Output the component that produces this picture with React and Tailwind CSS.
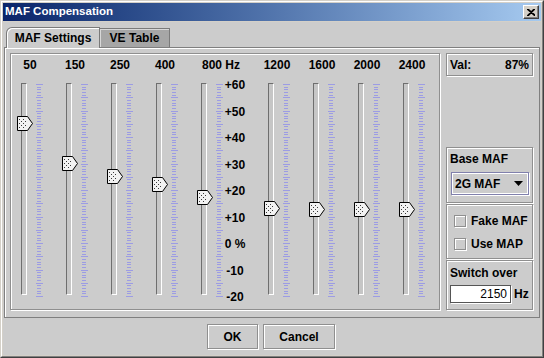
import React from 'react';

const sliders = [
  { label: '50', center: 123, width: 'w-[45px]' },
  { label: '150', center: 163, width: 'w-[45px]' },
  { label: '250', center: 176, width: 'w-[45px]' },
  { label: '400', center: 184, width: 'w-[45px]' },
  { label: '800 Hz', center: 197, width: 'w-[67px]', scale: true },
  { label: '1200', center: 208, width: 'w-[45px]' },
  { label: '1600', center: 209, width: 'w-[45px]' },
  { label: '2000', center: 209, width: 'w-[45px]' },
  { label: '2400', center: 209, width: 'w-[37px]' },
];

const scaleLabels = ['+60', '+50', '+40', '+30', '+20', '+10', '0 %', '-10', '-20'];

const etched = 'border border-[#8f8f8f] shadow-[inset_1px_1px_0_#fff,1px_1px_0_#fff]';

function Ticks() {
  const lines = [];
  for (let i = 0; i <= 80; i++) {
    const y = Math.round(1 + i * 2.65) + 0.5;
    const major = i % 5 === 0;
    lines.push(
      <line key={i} x1={major ? 0 : 1} x2={major ? 7 : 5} y1={y} y2={y} stroke="#9c9ce4" strokeWidth="1" />
    );
  }
  return (
    <svg width="8" height="214" className="block shrink-0 overflow-visible">
      {lines}
    </svg>
  );
}

function Thumb({ top }) {
  const dots = [];
  for (let y = 3; y <= 11; y += 2) {
    for (let x = y % 4 === 1 ? 4 : 2; x <= 9; x += 4) dots.push([x, y]);
  }
  return (
    <svg width="16" height="15" className="absolute left-[-4px]" style={{ top }}>
      <polygon points="0.5,0.5 10.5,0.5 15.5,7.5 10.5,14.5 0.5,14.5" fill="#f2f2f2" stroke="#000" />
      {dots.map(([x, y]) => (
        <rect key={x + '-' + y} x={x} y={y} width="1" height="1" fill="#3a3a3a" />
      ))}
    </svg>
  );
}

function SliderCol({ label, center, width, scale }) {
  return (
    <div className={`flex shrink-0 flex-col ${width}`}>
      {scale ? (
        <div className="h-4 whitespace-nowrap pl-px leading-4">{label}</div>
      ) : (
        <div className="flex h-4 w-[18px] justify-center whitespace-nowrap leading-4">{label}</div>
      )}
      <div className="relative mt-[10px] flex h-[212px]">
        <div className="h-full w-[6px] shrink-0 border border-l-[#6e6e6e] border-t-[#6e6e6e] border-r-white border-b-white bg-[#c6c6c6]" />
        <div className="ml-[9px]">
          <Ticks />
        </div>
        {scale && (
          <div className="-mt-[11px] flex w-[22px] flex-col">
            {scaleLabels.map((s) => (
              <div key={s} className="flex h-[26.5px] shrink-0 items-center justify-center whitespace-nowrap">
                {s}
              </div>
            ))}
          </div>
        )}
        <Thumb top={center - 90} />
      </div>
    </div>
  );
}

function Checkbox({ label }) {
  return (
    <div className="flex h-4 items-center">
      <div className={`h-[12px] w-[12px] ${etched}`} />
      <span className="ml-[5px]">{label}</span>
    </div>
  );
}

export default function App() {
  return (
    <div className="h-[358px] w-[544px] border border-t-[#d4d0c8] border-l-[#d4d0c8] border-r-[#404040] border-b-[#404040] bg-[#d4d0c8] font-['Liberation_Sans',Arial,sans-serif] text-[12px] font-bold text-black">
      <div className="flex h-full flex-col border border-t-white border-l-white border-r-[#808080] border-b-[#808080] p-px">
        <div className="flex h-[18px] shrink-0 items-center justify-between bg-linear-to-r from-[#0a246a] to-[#a6caf0] pl-[2px] pr-[2px]">
          <span className="text-[11.5px] font-bold text-white">MAF Compensation</span>
          <div className="flex h-[14px] w-[16px] items-center justify-center border border-t-white border-l-white border-r-[#404040] border-b-[#404040] bg-[#d4d0c8] shadow-[inset_-1px_-1px_0_#808080]">
            <svg width="8" height="7" viewBox="0 0 8 7">
              <path d="M0 0 L8 7 M1 0 L8 6 M7 0 L0 7 M8 0 L1 7" stroke="#000" strokeWidth="1.2" />
            </svg>
          </div>
        </div>

        <div className="mt-px flex flex-1 flex-col bg-[#cccccc] pt-[5px]">
          <div className="ml-px mr-px flex flex-col">
            <div className="flex h-[20px] items-end pl-[2px]">
              <div className="relative z-10 -mb-px flex h-[21px] w-[94px] items-center justify-center rounded-tl-[6px] border border-b-0 border-[#7a7a7a] bg-[#cccccc] pb-px shadow-[inset_1px_1px_0_#fff]">
                MAF Settings
              </div>
              <div className="flex h-[19px] w-[70px] items-center justify-center border border-b-0 border-l-0 border-[#7a7a7a] bg-[#a6a6a6] pb-px shadow-[inset_1px_1px_0_#d8d8d8]">
                VE Table
              </div>
            </div>

            <div className="flex h-[271px] border border-[#7f7f7f] pb-[7px] pl-[5px] pr-[6px] pt-[5px] shadow-[inset_1px_1px_0_#fff]">
              <div className={`flex h-[257px] w-[430px] shrink-0 pl-[10px] pt-[3px] ${etched}`}>
                {sliders.map((s) => (
                  <SliderCol key={s.label} {...s} />
                ))}
              </div>

              <div className="ml-[6px] flex w-[87px] flex-col">
                <div className={`flex h-[23px] items-center justify-between px-[3px] ${etched}`}>
                  <span>Val:</span>
                  <span>87%</span>
                </div>

                <div className={`mt-auto flex h-[56px] flex-col pl-[3px] pt-[3px] ${etched}`}>
                  <div className="leading-4">Base MAF</div>
                  <div className="ml-px mt-[5px] flex h-[23px] w-[78px] items-center justify-between border border-[#8080ac] pl-[3px] pr-[5px] shadow-[inset_1px_1px_0_#fff,inset_-1px_-1px_0_#fff,1px_1px_0_#fff]">
                    <span>2G MAF</span>
                    <svg width="9" height="5" viewBox="0 0 9 5">
                      <polygon points="0,0 9,0 4.5,5" fill="#000" />
                    </svg>
                  </div>
                </div>

                <div className={`mt-px flex h-[55px] flex-col gap-[7px] pl-[7px] pt-[8px] ${etched}`}>
                  <Checkbox label="Fake MAF" />
                  <Checkbox label="Use MAP" />
                </div>

                <div className={`mt-px flex h-[50px] flex-col pl-[3px] pt-[4px] ${etched}`}>
                  <div className="leading-4">Switch over</div>
                  <div className="mt-[4px] flex items-center">
                    <div className="flex h-[18px] w-[61px] items-center justify-end border border-[#555] bg-white pr-[3px] font-normal shadow-[1px_1px_0_#fff]">
                      2150
                    </div>
                    <span className="ml-[3px]">Hz</span>
                  </div>
                </div>
              </div>
            </div>
          </div>

          <div className="flex justify-center gap-[5px] pr-[2px] pt-[6px]">
            <div className={`flex h-[25px] w-[51px] items-center justify-center ${etched}`}>OK</div>
            <div className={`flex h-[25px] w-[72px] items-center justify-center ${etched}`}>Cancel</div>
          </div>
        </div>
      </div>
    </div>
  );
}
